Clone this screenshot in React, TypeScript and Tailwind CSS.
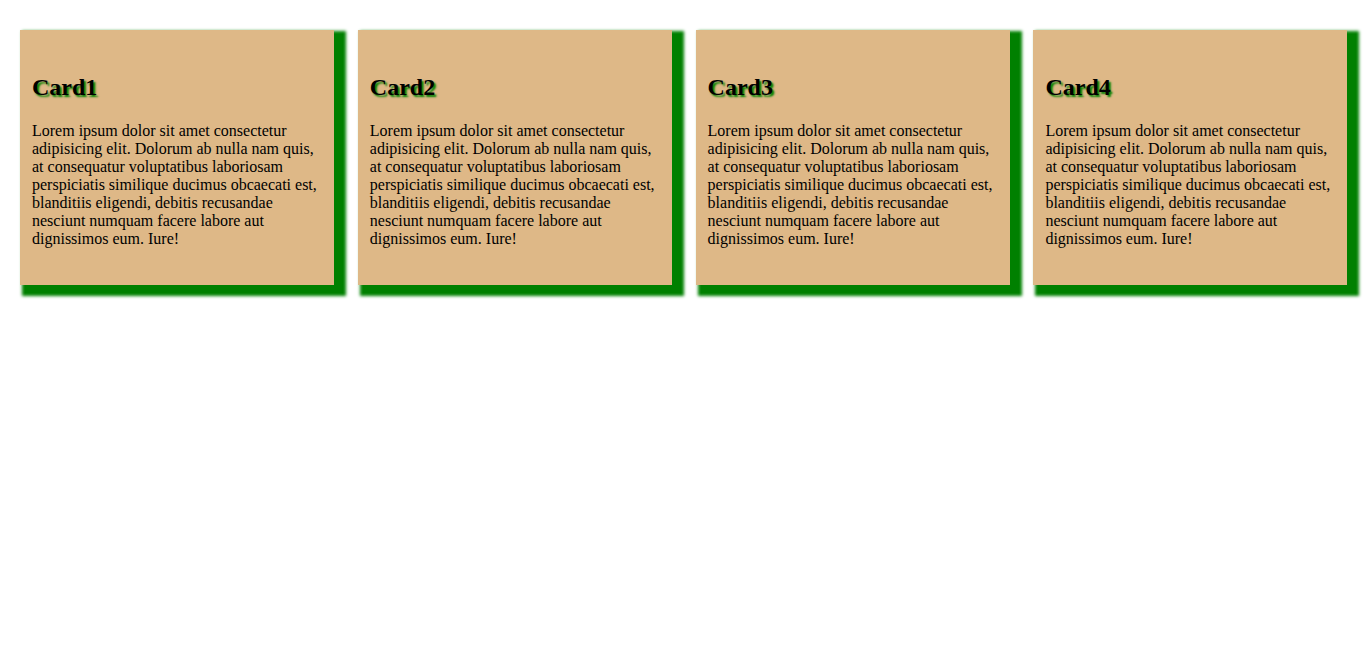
export default function App() {
  const cards = ["Card1", "Card2", "Card3", "Card4"];
  return (
    <div className="flex gap-[23.8px] pl-[20px] pt-[30px] bg-white min-h-[667px]" style={{ fontFamily: '"Liberation Serif", "Times New Roman", serif' }}>
      {cards.map((c) => (
        <div
          key={c}
          className="w-[314px] h-[255px] shrink-0 bg-[#deb887] px-[12px] pt-[24px] text-black shadow-[7px_6px_3px_5px_#008000]"
        >
          <h2 className="text-[24px] font-bold leading-[27.6px] mt-[20px] mb-[20.5px] [text-shadow:2px_2px_2px_#008000]">{c}</h2>
          <p className="text-[16px] leading-[18px]">
            Lorem ipsum dolor sit amet consectetur adipisicing elit. Dolorum ab nulla nam quis, at consequatur voluptatibus laboriosam perspiciatis similique ducimus obcaecati est, blanditiis eligendi, debitis recusandae nesciunt numquam facere labore aut dignissimos eum. Iure!
          </p>
        </div>
      ))}
    </div>
  );
}
